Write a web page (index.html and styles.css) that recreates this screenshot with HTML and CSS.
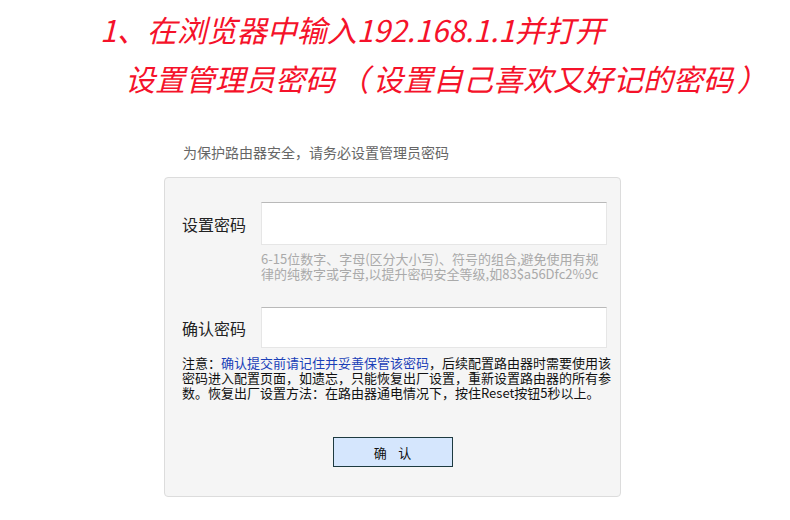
FILE: index.html
```html
<!DOCTYPE html>
<html lang="zh-CN">
<head>
    <meta charset="UTF-8">
    <meta name="viewport" content="width=device-width, initial-scale=1.0">
    <title>设置管理员密码</title>
    <link rel="stylesheet" href="styles.css">
</head>
<body>
    <div class="step-title">
        <div class="step-line">1、在浏览器中输入192.168.1.1并打开</div>
        <div class="step-line indent">设置管理员密码<span class="paren">（</span>设置自己喜欢又好记的密码<span class="paren">）</span></div>
    </div>

    <p class="intro">为保护路由器安全，请务必设置管理员密码</p>

    <div class="panel">
        <div class="field">
            <label for="pwd">设置密码</label>
            <input type="password" id="pwd">
        </div>
        <p class="hint">6-15位数字、字母(区分大小写)、符号的组合,避免使用有规<br>律的纯数字或字母,以提升密码安全等级,如83$a56Dfc2%9c</p>

        <div class="field second">
            <label for="pwd2">确认密码</label>
            <input type="password" id="pwd2">
        </div>
        <p class="note">注意：<span class="warn">确认提交前请记住并妥善保管该密码</span>，后续配置路由器时需要使用该<br>密码进入配置页面，如遗忘，只能恢复出厂设置，重新设置路由器的所有参<br>数。恢复出厂设置方法：在路由器通电情况下，按住Reset按钮5秒以上。</p>

        <div class="actions">
            <button type="button">确&nbsp;&nbsp;&nbsp;&nbsp;认</button>
        </div>
    </div>
</body>
</html>
```

FILE: styles.css
```css
body {
    margin: 0;
    background: #fff;
    font-family: "Noto Sans CJK SC", "Noto Sans", sans-serif;
    color: #333;
}
.step-title {
    padding-top: 5px;
    color: #f5122a;
    font-size: 30px;
    font-style: italic;
    line-height: 49px;
}
.step-line {
    margin-left: 100px;
    white-space: nowrap;
}
.step-line.indent {
    margin-left: 125px;
}
.paren {
    padding: 0 4px;
}
.intro {
    margin: 39px 0 0 183px;
    font-size: 14px;
    line-height: 20px;
    color: #666;
}
.panel {
    box-sizing: border-box;
    width: 457px;
    margin: 15px 0 0 164px;
    padding: 24px 10px 29px 17px;
    background: #f5f5f5;
    border: 1px solid #dcdcdc;
    border-radius: 4px;
}
.field {
    display: flex;
    align-items: center;
}
.field.second {
    margin-top: 26px;
}
.field label {
    width: 79px;
    font-size: 16px;
    color: #222;
}
.field input {
    box-sizing: border-box;
    width: 346px;
    height: 43px;
    margin: 0;
    padding: 0 8px;
    background: #fff;
    border: 1px solid #e6e6e6;
    border-top-color: #b9b9b9;
    outline: none;
}
.field.second input {
    height: 41px;
}
.hint {
    margin: 6px 0 0 79px;
    font-size: 13px;
    line-height: 15px;
    color: #aaa;
    white-space: nowrap;
}
.note {
    margin: 7px 0 0;
    font-size: 13px;
    line-height: 15px;
    color: #111;
    white-space: nowrap;
}
.warn {
    color: #1a3fb8;
}
.actions {
    display: flex;
    justify-content: center;
    margin-top: 37px;
    padding-right: 7px;
}
button {
    width: 120px;
    height: 30px;
    background: #d5e6fd;
    border: 1px solid #1d3a40;
    font-family: inherit;
    font-size: 13px;
    color: #111;
    cursor: pointer;
}
```
